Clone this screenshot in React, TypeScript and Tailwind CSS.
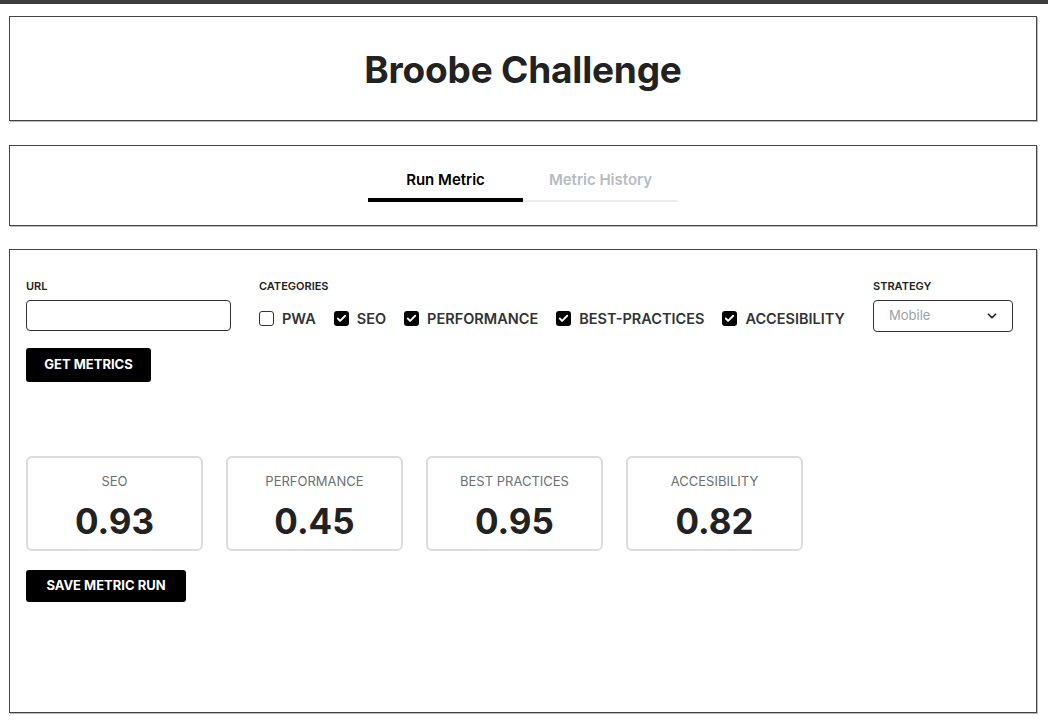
import { ChevronDown, Check } from 'lucide-react';

const categories = [
  { name: 'PWA', checked: false },
  { name: 'SEO', checked: true },
  { name: 'PERFORMANCE', checked: true },
  { name: 'BEST-PRACTICES', checked: true },
  { name: 'ACCESIBILITY', checked: true },
];

const metrics = [
  { label: 'SEO', value: '0.93' },
  { label: 'PERFORMANCE', value: '0.45' },
  { label: 'BEST PRACTICES', value: '0.95' },
  { label: 'ACCESIBILITY', value: '0.82' },
];

export default function App() {
  return (
    <div className="min-h-screen bg-white font-['Inter',sans-serif] text-[#222]">
      <div className="h-[4px] bg-[#3d3d3d]" />

      <div className="ml-[9px] mr-[11px] mt-[12px] flex h-[105px] items-center justify-center border border-[#444] shadow-[1px_1px_0_#bbb]">
        <h1 className="mt-[2px] text-[37px] font-bold tracking-[-0.2px] text-[#222]">Broobe Challenge</h1>
      </div>

      <div className="ml-[9px] mr-[11px] mt-[24px] flex h-[81px] justify-center border border-[#444] shadow-[1px_1px_0_#bbb]">
        <div className="mt-[24px] flex items-start">
          <button className="w-[155px] border-b-[4px] border-black pb-[8px] text-[15px] font-semibold leading-[20px] text-black">
            Run Metric
          </button>
          <button className="w-[155px] border-b-[2px] border-[#ebeeef] pb-[10px] text-[15px] font-semibold leading-[20px] text-[#b6bcc0]">
            Metric History
          </button>
        </div>
      </div>

      <div className="ml-[9px] mr-[11px] mt-[23px] h-[464px] border border-[#444] px-[16px] pt-[28px] shadow-[1px_1px_0_#bbb]">
        <div className="flex">
          <div className="w-[233px]">
            <label className="block text-[11px] font-semibold text-[#222]">URL</label>
            <input className="mt-[5px] h-[31px] w-[205px] rounded-[4px] border border-[#333] px-2 text-[13px] outline-none" />
            <button className="mt-[17px] flex h-[34px] w-[125px] items-center justify-center rounded-[3px] bg-black text-[13px] font-bold text-white">
              GET METRICS
            </button>
          </div>

          <div>
            <label className="block text-[11px] font-semibold text-[#222]">CATEGORIES</label>
            <div className="mt-[13px] flex items-center gap-[18px]">
              {categories.map((c) => (
                <div key={c.name} className="flex items-center gap-[8px]">
                  <span
                    className={`flex h-[15px] w-[15px] items-center justify-center rounded-[3px] ${
                      c.checked ? 'bg-black' : 'border border-[#333] bg-white'
                    }`}
                  >
                    {c.checked && <Check className="h-[11px] w-[11px] text-white" strokeWidth={4} />}
                  </span>
                  <span className="text-[14.5px] font-semibold text-[#333]">{c.name}</span>
                </div>
              ))}
            </div>
          </div>

          <div className="ml-auto mr-[7px] w-[140px]">
            <label className="block text-[11px] font-semibold text-[#222]">STRATEGY</label>
            <div className="mt-[5px] flex h-[32px] items-center justify-between rounded-[4px] border border-[#333] pl-[15px] pr-[13px]">
              <span className="text-[13px] text-[#9aa1a6]">Mobile</span>
              <ChevronDown className="h-[14px] w-[14px] text-[#222]" strokeWidth={3} />
            </div>
          </div>
        </div>

        <div className="mt-[74px] flex gap-[23px]">
          {metrics.map((m) => (
            <div
              key={m.label}
              className="flex h-[95px] w-[177px] flex-col items-center rounded-[6px] border-2 border-[#dcdcdc] pt-[14px]"
            >
              <span className="text-[13px] text-[#6b7075]">{m.label}</span>
              <span className="mt-[8px] text-[35px] font-bold leading-[44px] text-[#222]">{m.value}</span>
            </div>
          ))}
        </div>

        <button className="mt-[19px] flex h-[32px] w-[160px] items-center justify-center rounded-[3px] bg-black text-[13px] font-bold text-white">
          SAVE METRIC RUN
        </button>
      </div>
    </div>
  );
}
